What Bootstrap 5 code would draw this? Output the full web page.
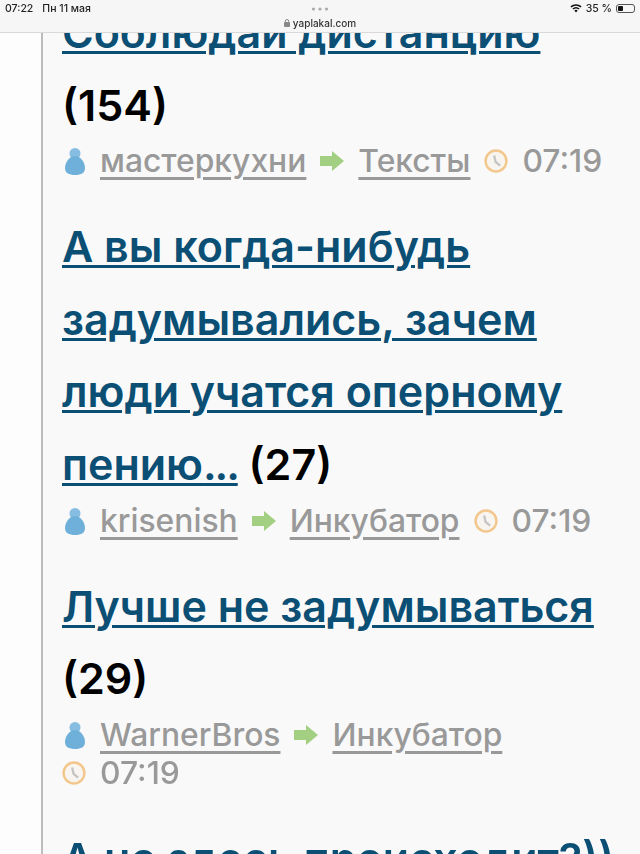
<!DOCTYPE html>
<html lang="ru">
<head>
  <meta charset="UTF-8">
  <meta name="viewport" content="width=device-width, initial-scale=1.0">
  <title>yaplakal.com</title>
  <link href="https://cdn.jsdelivr.net/npm/bootstrap@5.3.0/dist/css/bootstrap.min.css" rel="stylesheet">
  <style>
    html, body { height: 854px; overflow: hidden; }
    body { background-color: #fafafa; font-family: "Inter", "Liberation Sans", sans-serif; }
    /* ipad safari bar */
    .safari-bar {
      position: absolute; top: 0; left: 0; right: 0; height: 33px; z-index: 5;
      background-color: #f6f6f6; border-bottom: 1px solid #d9d9d9; color: #222;
      font-size: 10.5px; line-height: 12px; font-weight: 500; filter: blur(.3px);
    }
    .bar-row { height: 17px; padding: 0 5px; }
    .bar-left { gap: 9px; }
    .bar-dots { width: 19px; height: 4px; }
    .bar-site { font-size: 10px; line-height: 12px; gap: 3px; color: #333; }
    .battery { width: 19px; height: 9px; border: 1px solid #555; border-radius: 3px; padding: 1px; }
    .battery i { display: block; width: 35%; height: 100%; background-color: #111; border-radius: 1px; }
    .page-wrap { height: 880px; padding-left: 41px; background-color: #fdfdfd; filter: blur(.5px); }
    .topic-list { height: 880px; border-left: 2px solid #bcbcbc; background-color: #f9f9f9; padding: 0 20px 0 19px; }
    .topic-first { margin-top: -4px; }
    .topic { margin-bottom: 30px; }
    .topic-title { font-size: 43px; line-height: 72.6px; font-weight: 600; color: #000; margin: 0; }
    .topic-title a { color: #0b4f75; text-decoration-thickness: 3px; text-underline-offset: 3px; }
    .title-dots { letter-spacing: -.05em; }
    .topic-meta { font-size: 31.8px; line-height: 38px; font-weight: 500; color: #999; column-gap: 14px; margin-top: 1px; }
    .topic-meta a { color: #999; text-decoration-thickness: 3px; text-underline-offset: 5px; }
    .meta-part { gap: 14px; }
    .meta-part svg { flex: none; }
  </style>
</head>
<body>
<header class="safari-bar">
  <div class="bar-row d-flex align-items-center justify-content-between position-relative">
    <div class="bar-left d-flex"><span>07:22</span><span>Пн 11 мая</span></div>
    <svg class="bar-dots position-absolute top-50 start-50 translate-middle" viewBox="0 0 19 4"><circle cx="3" cy="2" r="1.6" fill="#aaa"/><circle cx="9.5" cy="2" r="1.6" fill="#aaa"/><circle cx="16" cy="2" r="1.6" fill="#aaa"/></svg>
    <div class="d-flex align-items-center gap-1">
      <svg width="12" height="9" viewBox="0 0 12 9"><path d="M6 8.6 4.3 6.6a2.6 2.6 0 0 1 3.4 0zM3.4 5.6 2.4 4.4a5.6 5.6 0 0 1 7.2 0l-1 1.2a4 4 0 0 0-5.2 0zM1.5 3.4.4 2.2a8.6 8.6 0 0 1 11.2 0l-1.1 1.2a7 7 0 0 0-9 0z" fill="#111"/></svg>
      <span>35 %</span>
      <span class="battery d-block"><i></i></span>
    </div>
  </div>
  <div class="bar-site d-flex align-items-center justify-content-center">
    <svg width="6" height="8" viewBox="0 0 6 8"><rect y="3" width="6" height="5" rx="1" fill="#888"/><path d="M1.3 3.5V2.2a1.7 1.7 0 0 1 3.4 0v1.3" fill="none" stroke="#888"/></svg>
    <span>yaplakal.com</span>
  </div>
</header>

<svg width="0" height="0" class="position-absolute">
  <defs>
    <symbol id="ic-user" viewBox="0 0 24 28"><circle cx="13" cy="6.5" r="5.5" fill="#86bde0"/><path d="M13 9c6 0 10 7 10 12 0 5-4 7-10 7S3 26 3 21c0-5 4-12 10-12z" fill="#6fb0da"/></symbol>
    <symbol id="ic-arrow" viewBox="0 0 24 20"><path d="M0 5h12V0l12 10-12 10v-5H0z" fill="#a3cf82"/></symbol>
    <symbol id="ic-clock" viewBox="0 0 26 26"><circle cx="13" cy="13" r="11.3" fill="#f8f5f0" stroke="#f3c78c" stroke-width="2.6"/><path d="M11 7l1.5 7 5 4" fill="none" stroke="#c4c4c4" stroke-width="2.5"/></symbol>
  </defs>
</svg>

<div class="page-wrap">
  <main class="topic-list">
    <article class="topic topic-first">
      <h2 class="topic-title"><a href="#">Соблюдай дистанцию</a> (154)</h2>
      <div class="topic-meta d-flex flex-wrap align-items-center">
        <span class="meta-part d-flex align-items-center"><svg width="24" height="28"><use href="#ic-user"/></svg><a href="#">мастеркухни</a></span>
        <span class="meta-part d-flex align-items-center"><svg width="24" height="20"><use href="#ic-arrow"/></svg><a href="#">Тексты</a></span>
        <span class="meta-part d-flex align-items-center"><svg width="24" height="26"><use href="#ic-clock"/></svg>07:19</span>
      </div>
    </article>
    <article class="topic">
      <h2 class="topic-title"><a href="#">А вы когда-нибудь задумывались, зачем люди учатся оперному пению<span class="title-dots">...</span></a> (27)</h2>
      <div class="topic-meta d-flex flex-wrap align-items-center">
        <span class="meta-part d-flex align-items-center"><svg width="24" height="28"><use href="#ic-user"/></svg><a href="#">krisenish</a></span>
        <span class="meta-part d-flex align-items-center"><svg width="24" height="20"><use href="#ic-arrow"/></svg><a href="#">Инкубатор</a></span>
        <span class="meta-part d-flex align-items-center"><svg width="24" height="26"><use href="#ic-clock"/></svg>07:19</span>
      </div>
    </article>
    <article class="topic">
      <h2 class="topic-title"><a href="#">Лучше не задумываться</a> (29)</h2>
      <div class="topic-meta d-flex flex-wrap align-items-center">
        <span class="meta-part d-flex align-items-center"><svg width="24" height="28"><use href="#ic-user"/></svg><a href="#">WarnerBros</a></span>
        <span class="meta-part d-flex align-items-center"><svg width="24" height="20"><use href="#ic-arrow"/></svg><a href="#">Инкубатор</a></span>
        <span class="meta-part d-flex align-items-center"><svg width="24" height="26"><use href="#ic-clock"/></svg>07:19</span>
      </div>
    </article>
    <article class="topic">
      <h2 class="topic-title"><a href="#">А но здесь происходит?))</a></h2>
    </article>
  </main>
</div>
<script src="https://cdn.jsdelivr.net/npm/bootstrap@5.3.0/dist/js/bootstrap.bundle.min.js"></script>
</body>
</html>
